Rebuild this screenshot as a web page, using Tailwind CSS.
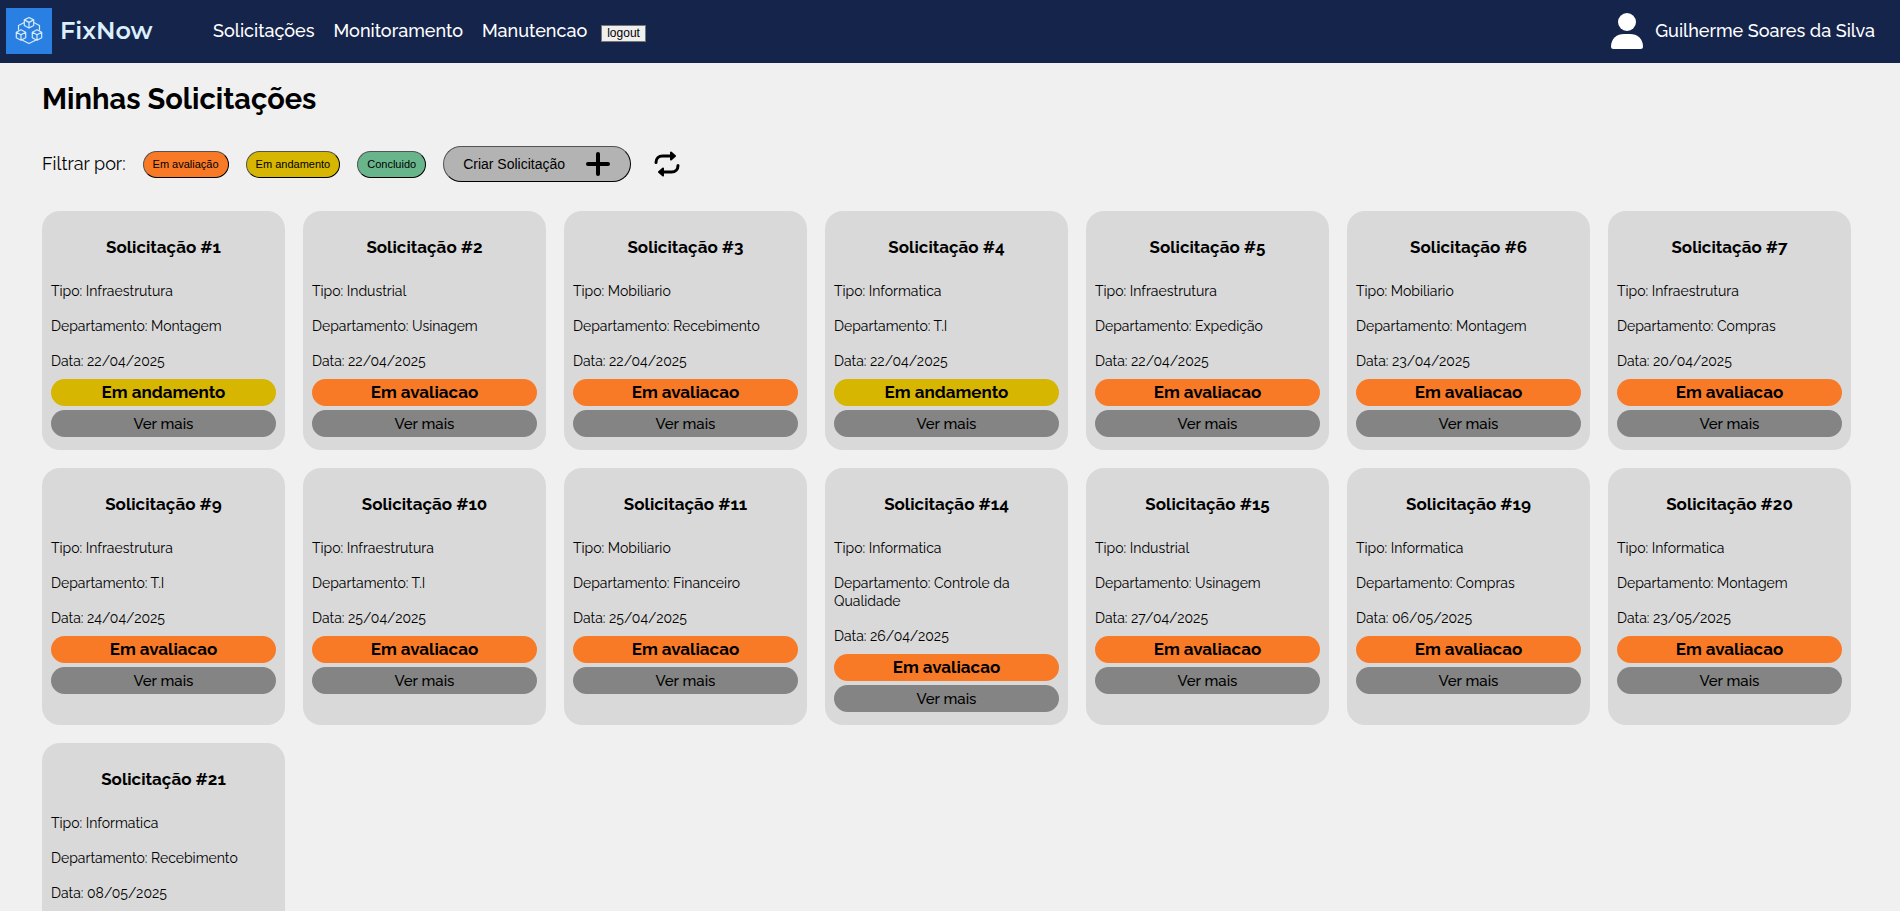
<!DOCTYPE html>
<html lang="pt-BR">
<head>
<meta charset="utf-8">
<meta name="viewport" content="width=device-width, initial-scale=1">
<title>FixNow - Minhas Solicitações</title>
<script src="https://cdn.jsdelivr.net/npm/@tailwindcss/browser@4"></script>
</head>
<body class="min-h-screen bg-[#f0f0f0] font-[Raleway,Lato,sans-serif] text-black">
<header class="flex h-[63px] items-center justify-between bg-[#15244b] pr-[25px] pb-px pl-[6px] text-lg leading-6 font-medium text-white">
  <div class="flex items-center">
    <a href="#" class="flex w-[207px] items-center gap-2" aria-label="FixNow">
      <svg class="h-[46px] w-[46px] shrink-0" viewBox="0 0 46 46" fill="none" stroke="#d6ecfb" stroke-width="1.2" stroke-linejoin="round" aria-hidden="true">
        <rect width="46" height="46" fill="#2a80e2" stroke="none"/>
        <path d="M23 9.500l4.700 2.400v5.600L23 20l-4.700-2.500v-5.600zM18.300 11.900l4.700 2.500 4.700-2.500M23 14.400V20"/>
        <path d="M15 21.800l4.700 2.400v5.600L15 32.300l-4.700-2.500v-5.600zM10.300 24.200l4.700 2.500 4.700-2.500M15 26.700v5.600"/>
        <path d="M31 21.800l4.700 2.400v5.600L31 32.300l-4.700-2.500v-5.600zM26.300 24.200l4.700 2.500 4.700-2.500M31 26.700v5.600"/>
        <path d="M18.300 14.500L12.500 17.500v5M27.700 14.500l5.800 3v5M16 32l7 3.500 7-3.500"/>
      </svg>
      <span class="font-[Montserrat,'DejaVu_Sans',sans-serif] text-2xl leading-8 font-semibold text-[#dceffc]">FixNow</span>
    </a>
    <nav class="flex items-center gap-[19px]">
      <a href="#">Solicitações</a>
      <a href="#">Monitoramento</a>
      <a href="#">Manutencao</a>
    </nav>
    <button type="button" class="mt-1 ml-[14px] h-[17px] border border-[#767676] bg-[#efefef] px-[5px] font-['Liberation_Sans',Arial,sans-serif] text-xs leading-[15px] font-normal text-black">logout</button>
  </div>
  <div class="flex items-center gap-3">
    <svg class="h-9 w-8" viewBox="0 0 32 36" fill="#fff" aria-hidden="true">
      <circle cx="16" cy="9" r="9"/>
      <path d="M0 33.500C0 25.500 6 21 13 21h6c7 0 13 4.500 13 12.500Q32 36 29.500 36h-27Q0 36 0 33.500z"/>
    </svg>
    <span>Guilherme Soares da Silva</span>
  </div>
</header>

<main class="pt-[18px] pr-[49px] pl-[42px]">
  <h1 class="text-[29px] leading-9 font-bold">Minhas Solicitações</h1>

  <div class="mt-[29px] flex items-center gap-[17px] font-['Liberation_Sans',Arial,sans-serif] text-[11px]">
    <span class="font-[Raleway,Lato,sans-serif] text-lg leading-6">Filtrar por:</span>
    <button type="button" class="h-[27px] rounded-full border border-black bg-[#f97a26] px-[9px] [border-style:outset]">Em avaliação</button>
    <button type="button" class="h-[27px] rounded-full border border-black bg-[#d6b600] px-[9px] [border-style:outset]">Em andamento</button>
    <button type="button" class="h-[27px] rounded-full border border-black bg-[#69b58b] px-[9px] [border-style:outset]">Concluido</button>
    <button type="button" class="flex h-9 items-center gap-5 rounded-full border border-black bg-[#b3b3b3] px-[19px] text-sm [border-style:outset]">
      Criar Solicitação
      <svg class="h-[26px] w-[26px]" viewBox="0 0 26 26" fill="none" stroke="#000" stroke-width="4" stroke-linecap="round" aria-hidden="true"><path d="M13 3v20M3 13h20"/></svg>
    </button>
    <button type="button" aria-label="Atualizar" class="ml-[6px]">
      <svg class="h-[26px] w-[26px]" viewBox="0 0 26 26" fill="none" stroke="#000" stroke-width="3" stroke-linecap="round" aria-hidden="true">
        <path d="M2 11.500C2 7.500 4.500 5 8.500 5H18M24 14.500c0 4-2.500 6.500-6.500 6.500H8"/>
        <path d="M17 1.500L21 5l-4 3.500zM9 17.500L5 21l4 3.500z" fill="#000" stroke-width="2" stroke-linejoin="round"/>
      </svg>
    </button>
  </div>

  <section id="cards" class="mt-[29px] grid grid-cols-[repeat(auto-fill,minmax(240px,1fr))] gap-[18px]" aria-label="Solicitações"></section>
</main>

<template id="card">
  <article class="rounded-[18px] bg-[#d9d9d9] px-[9px] pt-[26px] pb-[13px] text-sm leading-[18px]">
    <h2 class="mb-[25px] text-center text-[17px] leading-5 font-bold"></h2>
    <p data-f="tipo" class="mb-[17px]"></p>
    <p data-f="dep" class="mb-[17px]"></p>
    <p data-f="data" class="mb-[9px]"></p>
    <div data-f="status" class="mb-1 h-[27px] rounded-full text-center text-[17px] leading-[27px] font-bold"></div>
    <button type="button" class="block h-[27px] w-full rounded-full bg-[#848484] text-[15px] font-medium">Ver mais</button>
  </article>
</template>

<script>
const A = 'Em avaliacao', B = 'Em andamento';
const pedidos = [
  [1, 'Infraestrutura', 'Montagem', '22/04/2025', B],
  [2, 'Industrial', 'Usinagem', '22/04/2025', A],
  [3, 'Mobiliario', 'Recebimento', '22/04/2025', A],
  [4, 'Informatica', 'T.I', '22/04/2025', B],
  [5, 'Infraestrutura', 'Expedição', '22/04/2025', A],
  [6, 'Mobiliario', 'Montagem', '23/04/2025', A],
  [7, 'Infraestrutura', 'Compras', '20/04/2025', A],
  [9, 'Infraestrutura', 'T.I', '24/04/2025', A],
  [10, 'Infraestrutura', 'T.I', '25/04/2025', A],
  [11, 'Mobiliario', 'Financeiro', '25/04/2025', A],
  [14, 'Informatica', 'Controle da Qualidade', '26/04/2025', A],
  [15, 'Industrial', 'Usinagem', '27/04/2025', A],
  [19, 'Informatica', 'Compras', '06/05/2025', A],
  [20, 'Informatica', 'Montagem', '23/05/2025', A],
  [21, 'Informatica', 'Recebimento', '08/05/2025', A]
];
const cores = { [A]: 'bg-[#f97a26]', [B]: 'bg-[#d6b600]' };
const lista = document.getElementById('cards');
for (const [id, tipo, dep, data, status] of pedidos) {
  const card = document.getElementById('card').content.cloneNode(true);
  card.querySelector('h2').textContent = 'Solicitação #' + id;
  card.querySelector('[data-f=tipo]').textContent = 'Tipo: ' + tipo;
  card.querySelector('[data-f=dep]').textContent = 'Departamento: ' + dep;
  card.querySelector('[data-f=data]').textContent = 'Data: ' + data;
  const s = card.querySelector('[data-f=status]');
  s.textContent = status;
  s.classList.add(cores[status]);
  lista.append(card);
}
</script>
</body>
</html>
